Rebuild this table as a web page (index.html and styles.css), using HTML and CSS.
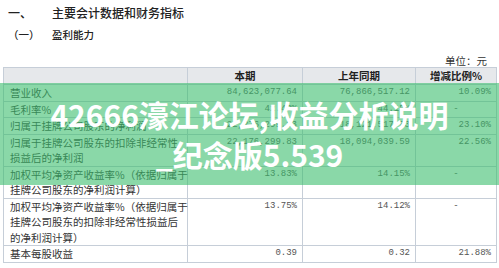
FILE: index.html
```html
<!DOCTYPE html>
<html lang="zh">
<head>
<meta charset="utf-8">
<link rel="stylesheet" href="styles.css">
</head>
<body>
<div class="page">
  <div class="h1"><span class="num">一、</span><span>主要会计数据和财务指标</span></div>
  <div class="h2"><span class="num">（一）</span><span>盈利能力</span></div>
  <div class="unit">单位：元</div>
  <table class="fin">
    <colgroup><col class="c1"><col class="c2"><col class="c3"><col class="c4"></colgroup>
    <thead>
      <tr><th></th><th>本期</th><th>上年同期</th><th>增减比例%</th></tr>
    </thead>
    <tbody>
      <tr><td class="lbl">营业收入</td><td class="n">84,623,077.64</td><td class="n">76,866,517.12</td><td class="n">10.09%</td></tr>
      <tr><td class="lbl">毛利率%</td><td class="n">42.43%</td><td class="n">44.15%</td><td class="n c">-</td></tr>
      <tr><td class="lbl">归属于挂牌公司股东的净利润</td><td class="n">22,276,299.83</td><td class="n">18,121,517.53</td><td class="n">23.10%</td></tr>
      <tr><td class="lbl">归属于挂牌公司股东的扣除非经常性<br>损益后的净利润</td><td class="n">22,176,299.83</td><td class="n">18,094,039.59</td><td class="n">22.56%</td></tr>
      <tr><td class="lbl">加权平均净资产收益率%（依据归属于<br>挂牌公司股东的净利润计算）</td><td class="n">13.83%</td><td class="n">14.15%</td><td class="n c">-</td></tr>
      <tr><td class="lbl">加权平均净资产收益率%（依据归属于<br>挂牌公司股东的扣除非经常性损益后<br>的净利润计算）</td><td class="n">13.75%</td><td class="n">14.12%</td><td class="n c">-</td></tr>
      <tr><td class="lbl">基本每股收益</td><td class="n">0.39</td><td class="n">0.32</td><td class="n">21.88%</td></tr>
    </tbody>
  </table>
</div>
<div class="overlay">
  <div class="headline">42666濠江论坛,收益分析说明<br>_纪念版5.539</div>
</div>
</body>
</html>
```

FILE: styles.css
```css
html, body {
  margin: 0;
  padding: 0;
  background: #ffffff;
}
body {
  width: 499px;
  height: 268px;
  overflow: hidden;
  position: relative;
  font-family: "Noto Sans CJK SC", "Liberation Sans", sans-serif;
  color: #333;
}
.page {
  padding-top: 4px;
}
.h1 {
  display: flex;
  height: 18px;
  line-height: 18px;
  font-size: 12px;
  font-weight: 500;
  color: #222;
}
.h2 {
  display: flex;
  margin-top: 5px;
  height: 16px;
  line-height: 16px;
  font-size: 10.5px;
  font-weight: 500;
  color: #222;
}
.num {
  width: 44px;
  padding-left: 8px;
}
.unit {
  margin-top: 12px;
  height: 12px;
  line-height: 12px;
  font-size: 10.5px;
  text-align: right;
  padding-right: 12px;
  color: #333;
}
.fin {
  margin-left: 3px;
  width: 493px;
  border-collapse: collapse;
  table-layout: fixed;
  font-size: 10.5px;
  line-height: 15.5px;
}
.c1 { width: 184px; }
.c2 { width: 115px; }
.c3 { width: 113px; }
.c4 { width: 81px; }
.fin th, .fin td {
  border: 1px solid #c6ced8;
  padding: 0;
  vertical-align: top;
}
.fin th {
  background: #e6e8eb;
  font-weight: 700;
  color: #222;
  text-align: center;
  height: 16px;
  line-height: 16px;
}
.fin td.lbl {
  padding-left: 6px;
  color: #333;
  white-space: nowrap;
}
.fin td.n {
  text-align: right;
  padding-right: 5px;
  font-family: "Liberation Mono", "DejaVu Sans Mono", monospace;
  font-size: 9px;
  color: #555;
}
.fin td.n.c {
  text-align: center;
  padding-right: 0;
}
.overlay {
  position: absolute;
  left: 0;
  right: 0;
  top: 83px;
  height: 102px;
  background: rgba(60, 190, 110, 0.6);
  display: flex;
  align-items: center;
  justify-content: center;
}
.headline {
  color: #ffffff;
  font-family: "Noto Sans CJK SC", "Noto Sans", sans-serif;
  font-weight: 700;
  font-size: 30px;
  line-height: 40px;
  text-align: center;
  white-space: nowrap;
}
```
